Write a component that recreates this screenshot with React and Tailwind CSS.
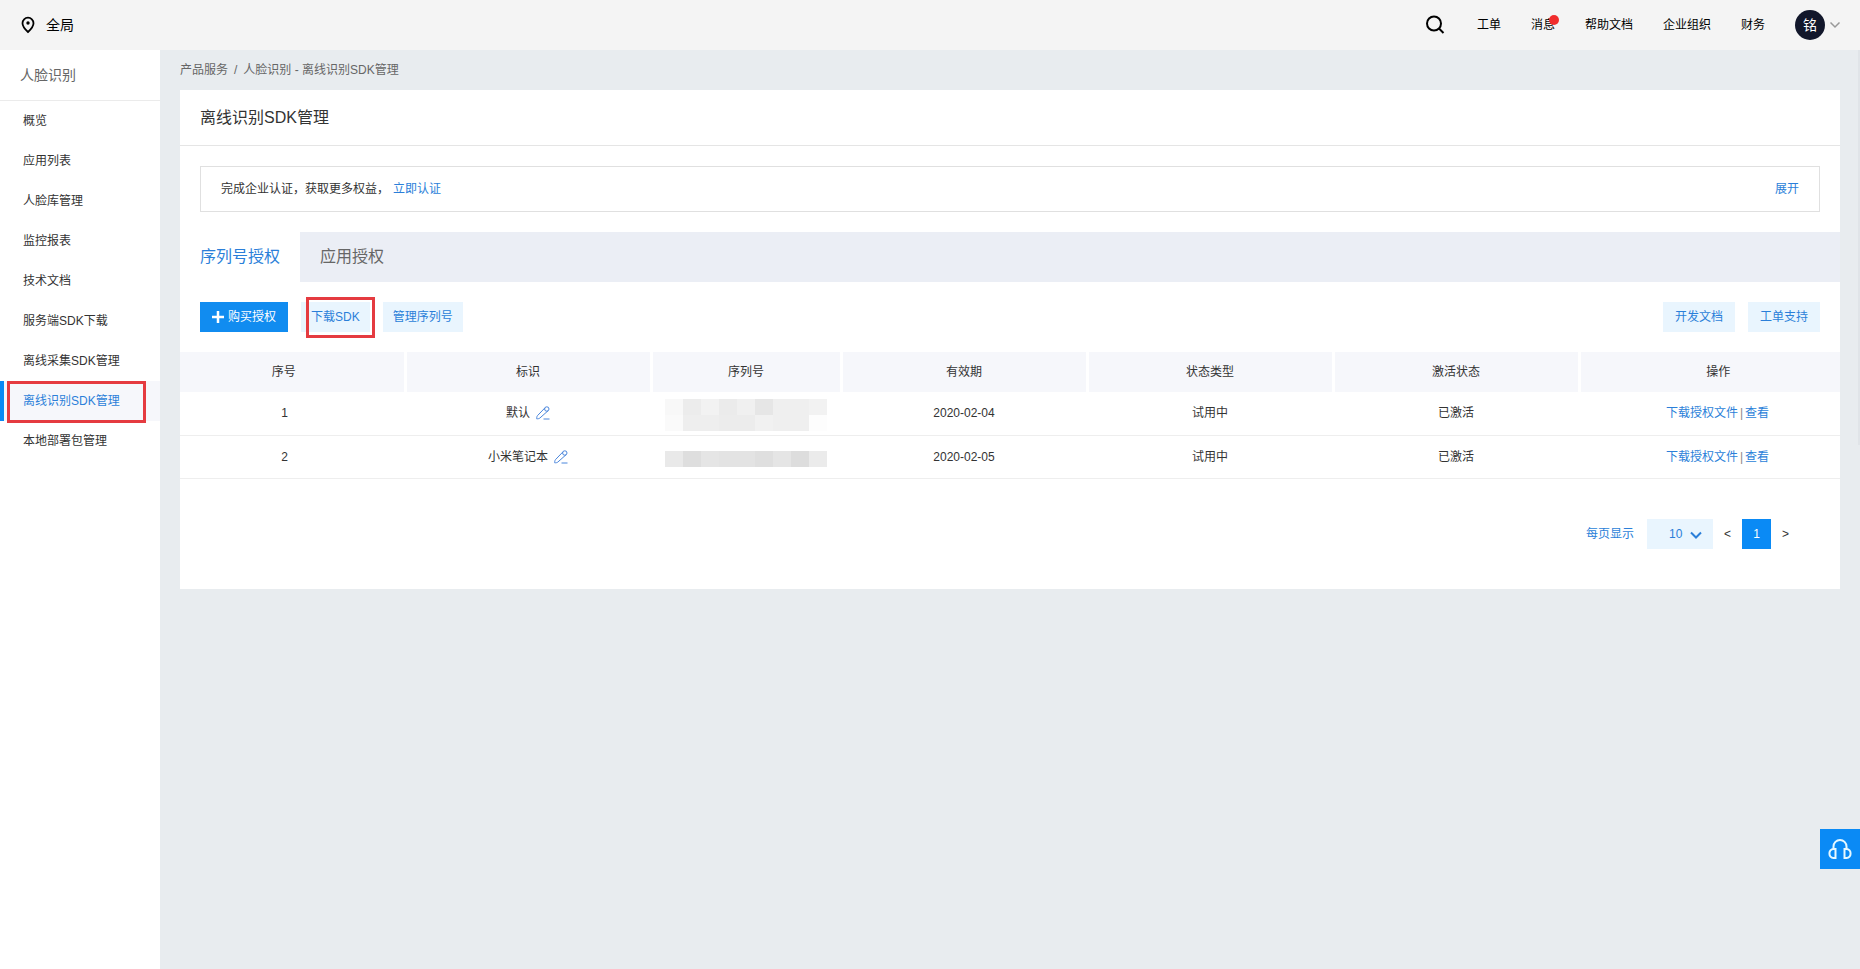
import { useState } from 'react'

const menus = [
  '概览',
  '应用列表',
  '人脸库管理',
  '监控报表',
  '技术文档',
  '服务端SDK下载',
  '离线采集SDK管理',
  '离线识别SDK管理',
  '本地部署包管理'
]

const licenses = [
  {
    id: 1,
    name: '默认',
    mosaic: [
      ['#f8f8f8', '#ececec', '#f2f2f2', '#ebebeb', '#f0f0f0', '#e6e6e6', '#efefef', '#efefef', '#f2f2f2'],
      ['#fafafa', '#eeeeee', '#eeeeee', '#ececec', '#ececec', '#f1f1f1', '#efefef', '#efefef', '#fdfdfd']
    ],
    expire: '2020-02-04',
    type: '试用中',
    status: '已激活'
  },
  {
    id: 2,
    name: '小米笔记本',
    mosaic: [
      ['#e9e9e9', '#dedede', '#e5e5e5', '#e3e3e3', '#e3e3e3', '#dfdfdf', '#e5e5e5', '#dddddd', '#ebebeb']
    ],
    expire: '2020-02-05',
    type: '试用中',
    status: '已激活'
  }
]

export default function App() {
  const [activeMenu, setActiveMenu] = useState('离线识别SDK管理')
  const [activeTab, setActiveTab] = useState('序列号授权')

  return (
    <div className="flex min-h-screen flex-col bg-[#e8ecef] font-['Liberation_Sans','Noto_Sans_CJK_SC',sans-serif] text-xs text-[#333]">
      <Header />
      <div className="flex flex-1">
        <Sidebar active={activeMenu} onSelect={setActiveMenu} />
        <main className="min-w-0 flex-1 px-5">
          <nav className="flex h-10 items-center gap-1.5 text-[#666]">
            <a href="#service">产品服务</a>
            <span>/</span>
            <span>人脸识别 - 离线识别SDK管理</span>
          </nav>
          <section className="bg-white pb-10">
            <h1 className="flex h-14 items-center border-b border-[#e5e5e5] px-5 text-base">离线识别SDK管理</h1>
            <Notice />
            <Tabs active={activeTab} onSelect={setActiveTab} />
            <Toolbar />
            <LicenseTable />
            <Pagination />
          </section>
        </main>
      </div>
      <div className="fixed top-[50px] right-0 h-[395px] w-0.5 bg-[#e0e4e8]" />
      <button
        type="button"
        aria-label="在线客服"
        className="fixed right-0 bottom-[100px] flex size-10 cursor-pointer items-center justify-center bg-[#0a8af5] text-[#e6f8ff]">
        <HeadsetIcon />
      </button>
    </div>
  )
}

function Header() {
  return (
    <header className="flex h-[50px] items-center justify-between bg-[#f4f4f4] pr-[19px] pl-5 text-black">
      <button type="button" className="flex cursor-pointer items-center gap-2.5 text-sm">
        <PinIcon />
        全局
      </button>
      <div className="flex items-center gap-[30px]">
        <button type="button" aria-label="搜索" className="mr-0.5 cursor-pointer">
          <SearchIcon />
        </button>
        <a href="#ticket">工单</a>
        <a href="#message" className="relative">
          消息
          <span className="absolute -top-0.5 -right-1 size-2.5 rounded-full bg-[#f02d2d]" />
        </a>
        <a href="#help">帮助文档</a>
        <a href="#org">企业组织</a>
        <a href="#finance">财务</a>
        <button type="button" className="flex cursor-pointer items-center gap-1">
          <span className="flex size-[30px] items-center justify-center rounded-full bg-[#12172b] text-sm text-white">铭</span>
          <svg width="12" height="8" viewBox="0 0 12 8" fill="none" stroke="#999" strokeWidth="1.5">
            <path d="M1.5 1.5L6 6l4.500-4.500" />
          </svg>
        </button>
      </div>
    </header>
  )
}

function Sidebar({ active, onSelect }) {
  return (
    <aside className="w-40 shrink-0 bg-white">
      <h2 className="flex h-[51px] items-center border-b border-[#ebebeb] px-5 text-sm text-[#666]">人脸识别</h2>
      <ul>
        {menus.map(menu => (
          <li key={menu} className="relative">
            <button
              type="button"
              onClick={() => onSelect(menu)}
              className={
                menu === active
                  ? 'flex h-10 w-full cursor-pointer items-center border-l-4 border-[#0a8af5] bg-[#f6f7fb] pl-[19px] text-[#2b7fd9]'
                  : 'flex h-10 w-full cursor-pointer items-center border-l-4 border-transparent pl-[19px]'
              }>
              {menu}
            </button>
            {menu === '离线识别SDK管理' && (
              <span className="pointer-events-none absolute top-0 right-3.5 -bottom-0.5 left-[7px] border-3 border-[#e53b40]" />
            )}
          </li>
        ))}
      </ul>
    </aside>
  )
}

function Notice() {
  return (
    <div className="px-5 py-5">
      <div className="flex h-[46px] items-center justify-between border border-[#e0e0e0] px-5">
        <p>
          完成企业认证，获取更多权益，
          <a href="#verify" className="ml-1 text-[#2b7fd9]">立即认证</a>
        </p>
        <button type="button" className="cursor-pointer text-[#2b7fd9]">展开</button>
      </div>
    </div>
  )
}

function Tabs({ active, onSelect }) {
  return (
    <div className="flex h-[50px] bg-[#ebeef5] text-base">
      {['序列号授权', '应用授权'].map(tab => (
        <button
          key={tab}
          type="button"
          onClick={() => onSelect(tab)}
          className={tab === active ? 'cursor-pointer bg-white px-5 text-[#2b7fd9]' : 'cursor-pointer px-5 text-[#666]'}>
          {tab}
        </button>
      ))}
    </div>
  )
}

function Toolbar() {
  return (
    <div className="flex items-center justify-between p-5">
      <div className="flex gap-[13px]">
        <button type="button" className="flex h-[30px] cursor-pointer items-center gap-1 bg-[#118cf0] px-3 text-white">
          <svg width="12" height="12" viewBox="0 0 12 12" stroke="currentColor" strokeWidth="2.500">
            <path d="M6 0v12M0 6h12" />
          </svg>
          购买授权
        </button>
        <div className="relative">
          <LightButton className="px-2.5">下载SDK</LightButton>
          <span className="pointer-events-none absolute -top-[5px] -right-[5px] -bottom-1.5 left-[5px] border-3 border-[#e53b40]" />
        </div>
        <LightButton className="px-2.5">管理序列号</LightButton>
      </div>
      <div className="flex gap-[13px]">
        <LightButton className="px-3">开发文档</LightButton>
        <LightButton className="px-3">工单支持</LightButton>
      </div>
    </div>
  )
}

function LightButton({ className, children }) {
  return (
    <button type="button" className={`h-[30px] cursor-pointer bg-[#e9f5fe] text-[#2b7fd9] ${className}`}>
      {children}
    </button>
  )
}

function LicenseTable() {
  return (
    <table className="w-full table-fixed text-center">
      <thead>
        <tr className="h-10 bg-[#f6f7fb]">
          <th className="w-[225px] border-r-3 border-white pr-4 font-normal">序号</th>
          <th className="w-[246px] border-r-3 border-white font-normal">标识</th>
          <th className="w-[190px] border-r-3 border-white font-normal">序列号</th>
          <th className="w-[246px] border-r-3 border-white font-normal">有效期</th>
          <th className="w-[246px] border-r-3 border-white font-normal">状态类型</th>
          <th className="w-[246px] border-r-3 border-white font-normal">激活状态</th>
          <th className="w-[261px] pl-4 font-normal">操作</th>
        </tr>
      </thead>
      <tbody>
        {licenses.map(item => (
          <tr key={item.id} className="h-[43px] border-b border-[#eee]">
            <td className="pr-4">{item.id}</td>
            <td>
              <span className="inline-flex items-center gap-1.5">
                {item.name}
                <button type="button" aria-label="编辑标识" className="cursor-pointer">
                  <EditIcon />
                </button>
              </span>
            </td>
            <td className="pt-1">
              <Mosaic rows={item.mosaic} />
            </td>
            <td>{item.expire}</td>
            <td>{item.type}</td>
            <td>{item.status}</td>
            <td className="pl-4">
              <a href="#download" className="text-[#2b7fd9]">下载授权文件</a>
              <span className="mx-0.5 text-[#888]">|</span>
              <a href="#view" className="text-[#2b7fd9]">查看</a>
            </td>
          </tr>
        ))}
      </tbody>
    </table>
  )
}

function Mosaic({ rows }) {
  return (
    <svg width="162" height={rows.length * 16} className="mx-auto" shapeRendering="crispEdges">
      {rows.map((row, y) =>
        row.map((color, x) => (
          <rect key={`${x}-${y}`} x={x * 18} y={y * 16} width="18" height="16" fill={color} />
        ))
      )}
    </svg>
  )
}

function Pagination() {
  return (
    <div className="mt-10 flex h-[30px] items-center justify-end pr-[51px]">
      <label htmlFor="pageSize" className="mr-[13px] text-[#2b7fd9]">每页显示</label>
      <div className="relative mr-[11px]">
        <select
          id="pageSize"
          defaultValue="10"
          className="h-[30px] w-[66px] cursor-pointer appearance-none bg-[#e9f5fe] pl-[22px] text-[#2b7fd9]">
          <option>10</option>
          <option>20</option>
          <option>50</option>
        </select>
        <svg
          width="12"
          height="8"
          viewBox="0 0 12 8"
          fill="none"
          stroke="#2b7fd9"
          strokeWidth="2"
          className="pointer-events-none absolute top-3 right-[11px]">
          <path d="M1 1.500L6 6.500l5-5" />
        </svg>
      </div>
      <button type="button" aria-label="上一页" className="cursor-pointer">&lt;</button>
      <button type="button" className="mx-[11px] h-[30px] w-[29px] cursor-pointer bg-[#0a8af5] text-white">1</button>
      <button type="button" aria-label="下一页" className="cursor-pointer">&gt;</button>
    </div>
  )
}

function PinIcon() {
  return (
    <svg width="16" height="18" viewBox="0 0 16 18" fill="none" stroke="currentColor" strokeWidth="1.800">
      <path d="M8 16C4.800 13 2.500 10.300 2.500 7.200a5.500 5.500 0 0 1 11 0C13.500 10.300 11.200 13 8 16z" />
      <circle cx="8" cy="7" r="1.700" fill="currentColor" stroke="none" />
    </svg>
  )
}

function SearchIcon() {
  return (
    <svg width="20" height="20" viewBox="0 0 20 20" fill="none" stroke="currentColor" strokeWidth="2">
      <circle cx="9" cy="8.500" r="7" />
      <path d="M14 13.500l4.500 4.500" />
    </svg>
  )
}

function EditIcon() {
  return (
    <svg width="14" height="14" viewBox="0 0 14 14" fill="none" stroke="#4a86dc" strokeWidth="1">
      <circle cx="10.800" cy="3" r="2.200" />
      <path d="M9 1.800L1.500 9.600c-.8 1-.8 2.400-.8 3.200 1.200 0 2.300 0 3.200-.8L12 4.800" />
      <path d="M7.500 13h6" />
    </svg>
  )
}

function HeadsetIcon() {
  return (
    <svg width="24" height="20" viewBox="0 0 24 20" fill="none" stroke="currentColor" strokeWidth="2">
      <path d="M5.500 10.500V7.500a6.500 6.500 0 0 1 13 0v3" />
      <path d="M7.500 10v9H5.500a4 4 0 0 1-4-4.500 4 4 0 0 1 4-4.500zM16.500 10v9h2a4 4 0 0 0 4-4.500 4 4 0 0 0-4-4.500z" />
    </svg>
  )
}
